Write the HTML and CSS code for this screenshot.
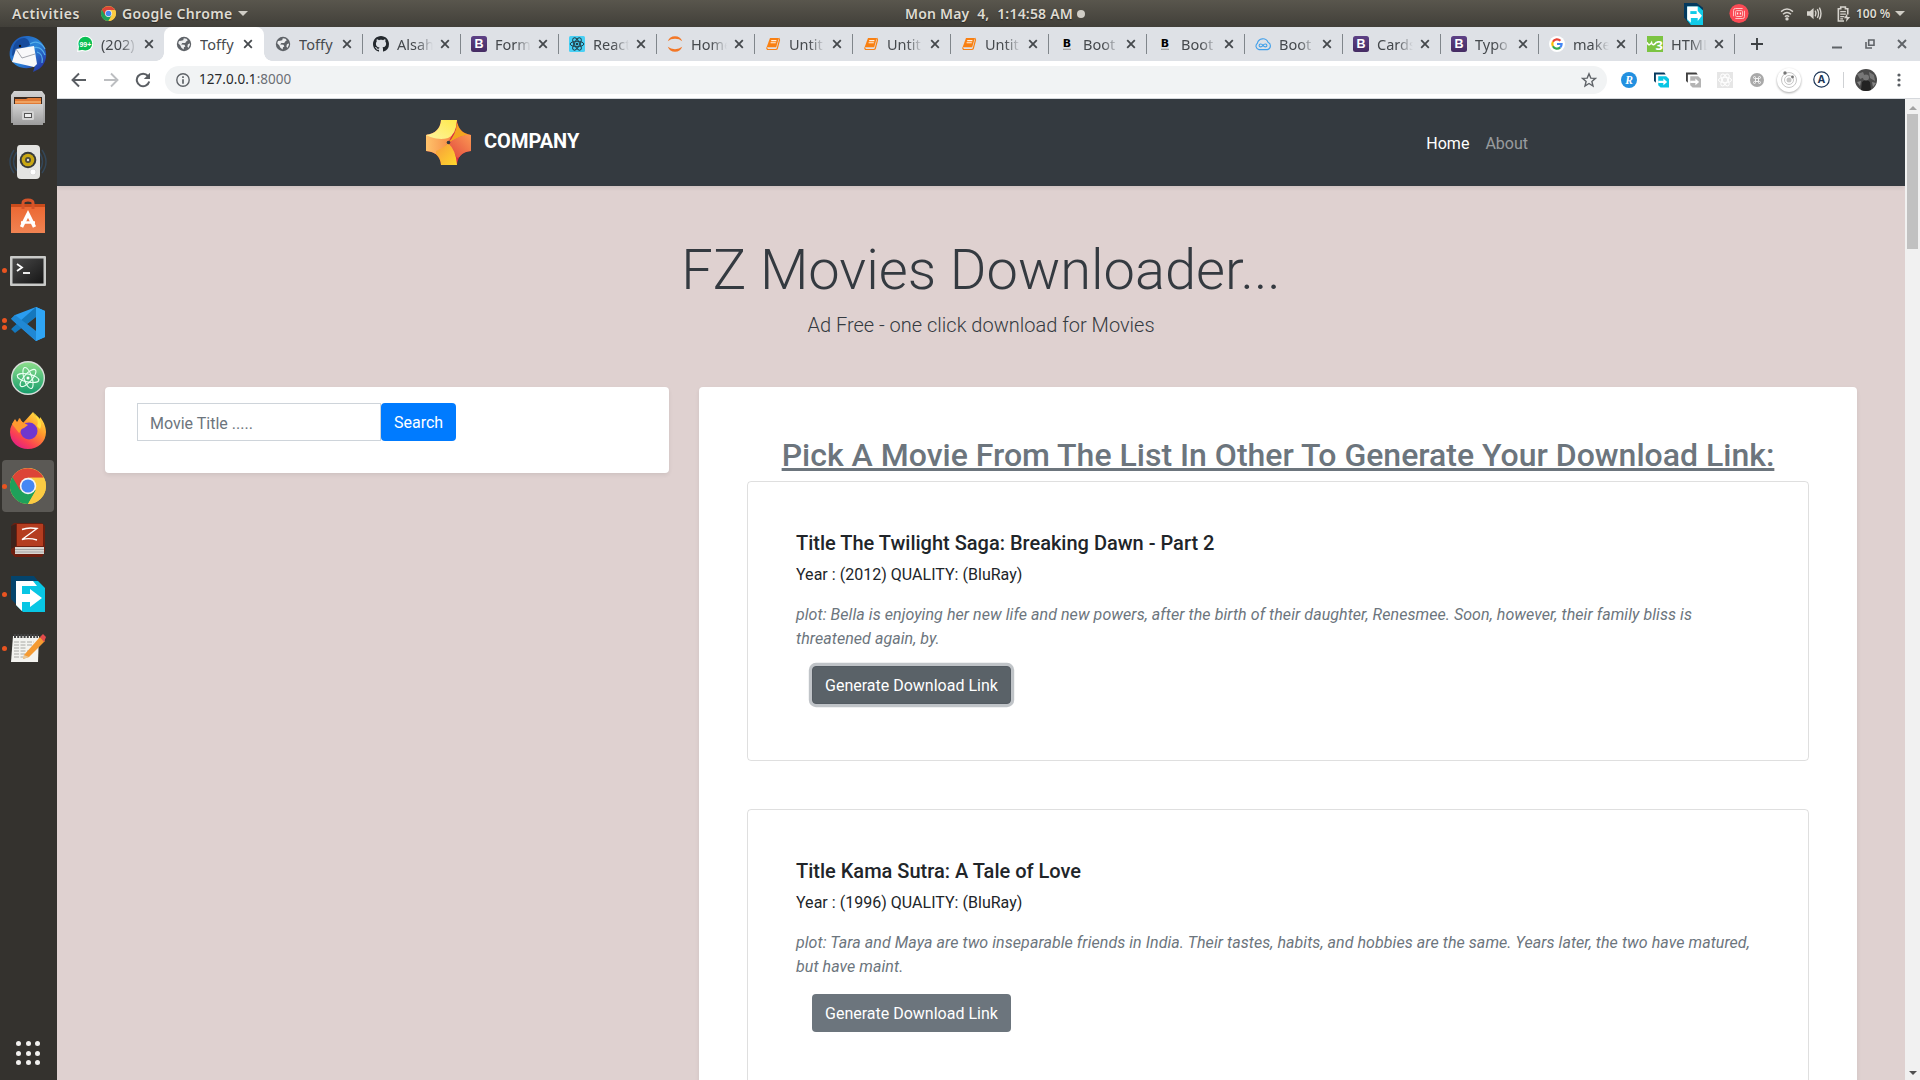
FILE: index.html
```html
<!DOCTYPE html>
<html lang="en">
<head>
<meta charset="utf-8">
<title>Toffy</title>
<link rel="stylesheet" href="styles.css">
</head>
<body>
<svg class="defs" width="0" height="0">
  <defs>
    <linearGradient id="purple" x1="0" y1="0" x2="0" y2="1"><stop offset="0" stop-color="#5d4186"/><stop offset="1" stop-color="#452c63"/></linearGradient>
    <linearGradient id="bird" x1="0" y1="0" x2="1" y2="1"><stop offset="0" stop-color="#1b4fb0"/><stop offset=".5" stop-color="#2b86d9"/><stop offset="1" stop-color="#22209a"/></linearGradient>
    <linearGradient id="metal" x1="0" y1="0" x2="0" y2="1"><stop offset="0" stop-color="#d2d2d2"/><stop offset="1" stop-color="#9c9c9c"/></linearGradient>
    <linearGradient id="bag" x1="0" y1="0" x2="0" y2="1"><stop offset="0" stop-color="#ec6630"/><stop offset="1" stop-color="#f08352"/></linearGradient>
    <linearGradient id="atomg" x1="0" y1="0" x2="0" y2="1"><stop offset="0" stop-color="#8fe08c"/><stop offset="1" stop-color="#159c6c"/></linearGradient>
    <linearGradient id="fox" x1=".9" y1="0" x2=".2" y2="1"><stop offset="0" stop-color="#fff04a"/><stop offset=".4" stop-color="#ff9a2b"/><stop offset=".75" stop-color="#fb4152"/><stop offset="1" stop-color="#e01a8c"/></linearGradient>
    <linearGradient id="term" x1="0" y1="0" x2="1" y2="1"><stop offset="0" stop-color="#4a4a4a"/><stop offset="1" stop-color="#151515"/></linearGradient>
    <symbol id="chrome" viewBox="0 0 48 48">
      <circle cx="24" cy="24" r="24" fill="#fbcb43"/>
      <path d="M24 24 3.2 12A24 24 0 0 0 24 48L34.4 30Z" fill="#1fa05a"/>
      <path d="M3.2 12A24 24 0 0 1 44.8 13H24L13.6 30Z" fill="#dc4437"/>
      <path d="M24 13H45.3A24 24 0 0 1 24 48L34.4 30Z" fill="#fbcb43"/>
      <circle cx="24" cy="24" r="11" fill="#f4f4f4"/><circle cx="24" cy="24" r="8.8" fill="#4587f3"/>
    </symbol>
    <symbol id="x" viewBox="0 0 10 10"><path d="M1.2 1.2 8.8 8.8M8.8 1.2 1.2 8.8" stroke="#45494d" stroke-width="1.8" fill="none"/></symbol>
    <symbol id="globe" viewBox="0 0 16 16"><circle cx="8" cy="8" r="7.2" fill="#5f6368"/><path d="M7.8 2.3 10.5 2.7 11.8 4.3 10.2 5.6 9.2 7 6.3 7 5.2 8.6 8.5 8.8 9.4 10.4 8 11.2 7.6 13.4 5.2 11.6 4.4 9.4 2.2 7.3 3 5 5 4.8 7.2 4.2ZM13.6 7.2 14 8.7 12.4 12 11.4 10.6 11.8 8.4Z" fill="#eceef0"/></symbol>
    <symbol id="github" viewBox="0 0 16 16"><path fill="#24292e" d="M8 0C3.58 0 0 3.58 0 8c0 3.54 2.29 6.53 5.47 7.59.4.07.55-.17.55-.38 0-.19-.01-.82-.01-1.49-2.01.37-2.53-.49-2.69-.94-.09-.23-.48-.94-.82-1.13-.28-.15-.68-.52-.01-.53.63-.01 1.08.58 1.23.82.72 1.21 1.87.87 2.33.66.07-.52.28-.87.51-1.07-1.78-.2-3.64-.89-3.64-3.95 0-.87.31-1.59.82-2.15-.08-.2-.36-1.02.08-2.12 0 0 .67-.21 2.2.82.64-.18 1.32-.27 2-.27s1.36.09 2 .27c1.53-1.04 2.2-.82 2.2-.82.44 1.1.16 1.92.08 2.12.51.56.82 1.27.82 2.15 0 3.07-1.87 3.75-3.65 3.95.29.25.54.73.54 1.48 0 1.07-.01 1.93-.01 2.2 0 .21.15.46.55.38A8.01 8.01 0 0 0 16 8c0-4.42-3.58-8-8-8z"/></symbol>
    <symbol id="boot" viewBox="0 0 16 16"><rect width="16" height="16" rx="2.5" fill="url(#purple)"/><text x="8" y="12.3" text-anchor="middle" class="glyph-b">B</text></symbol>
    <symbol id="react" viewBox="0 0 16 16"><rect width="16" height="16" rx="1.5" fill="#48d0f5"/><g fill="none" stroke="#23404a" stroke-width="1"><ellipse cx="8" cy="8" rx="6.8" ry="2.7"/><ellipse cx="8" cy="8" rx="6.8" ry="2.7" transform="rotate(60 8 8)"/><ellipse cx="8" cy="8" rx="6.8" ry="2.7" transform="rotate(120 8 8)"/></g><circle cx="8" cy="8" r="1.3" fill="#23404a"/></symbol>
    <symbol id="jupyter" viewBox="0 0 16 16"><path d="M.8 5.2A7.7 7.7 0 0 1 15.2 5.2 9.6 7 0 0 0 .8 5.2ZM.8 10.8A7.7 7.7 0 0 0 15.2 10.8 9.6 7 0 0 1 .8 10.8Z" fill="#f37726"/></symbol>
    <symbol id="book" viewBox="0 0 16 16"><path d="M5 2H13.8L11.2 11.3H1.6Z" fill="#f98012"/><path d="M13.8 2 14.5 4 12.2 12.8 11 13.5H2.4L1.5 11.5" fill="none" stroke="#f98012" stroke-width="1.2"/><path d="M6.2 4.6H11.4M5.6 6.8H10.8" stroke="#fff0e0" stroke-width="1.1"/></symbol>
    <symbol id="blackb" viewBox="0 0 16 16"><text x="8" y="11" text-anchor="middle" class="glyph-bk">B</text><path d="M4 13.3H12" stroke="#999" stroke-width="1.2"/></symbol>
    <symbol id="cloud" viewBox="0 0 16 16"><g fill="none" stroke="#42a0ea" stroke-width="1.1"><path d="M4 13.6A3.6 3.6 0 0 1 2.4 7.2 5.6 5.6 0 0 1 13 6.2 3.9 3.9 0 0 1 12.4 13.6Z"/><path d="M8 9.4C6.7 7.5 4.1 7.7 4.1 9.5S6.7 11.5 8 9.4 11.9 7.7 11.9 9.5 9.3 11.3 8 9.4Z"/></g></symbol>
    <symbol id="google" viewBox="0 0 16 16"><circle cx="8" cy="8" r="8" fill="#fff"/><g fill="none" stroke-width="2.2"><path d="M11.4 4.8A4.7 4.7 0 0 0 3.9 5.7" stroke="#ea4335"/><path d="M3.9 5.7A4.7 4.7 0 0 0 3.9 10.3" stroke="#fbbc05"/><path d="M3.9 10.3A4.7 4.7 0 0 0 11.2 11.4" stroke="#34a853"/><path d="M11.2 11.4A4.7 4.7 0 0 0 12.6 8H8" stroke="#4285f4"/></g></symbol>
    <symbol id="w3" viewBox="0 0 16 16"><rect width="16" height="16" fill="#7cc442"/><path d="M0 6.3Q1.2 9.3 2.6 8.6T4.6 6.7Q5.3 9.4 7 8.5T9.4 6.2" fill="none" stroke="#fff" stroke-width="1.5"/><text x="12.2" y="13.6" text-anchor="middle" class="glyph-3">3</text></symbol>
    <symbol id="fdm" viewBox="0 0 36 38"><path d="M0 0H24L36 8V38H12L0 25Z" fill="#04395e"/><path d="M6 6H28L36 13V38H13L6 30Z" fill="#10cbe8"/><path d="M6 6H26V14L34 22 26 31V26H13V34L6 28Z" fill="#fff"/><path d="M12 14H24V19H12Z" fill="#10cbe8"/></symbol>
    <symbol id="ext" viewBox="0 0 16 16"><path d="M0 0H11L12.5 2H2V11L0 9Z" class="ext-back"/><path d="M4.5 4H13L16 7V16H7L4.5 13.5Z" class="ext-front"/><path d="M4.5 8.7H10V6.3L14 10 10 13.7V11.3H4.5Z" fill="#fff"/></symbol>
  </defs>
</svg>

<header class="topbar">
  <div class="topbar-left">
    <span class="activities">Activities</span>
    <svg class="mini-chrome"><use href="#chrome"/></svg>
    <span class="appname">Google Chrome</span>
    <i class="caret"></i>
  </div>
  <div class="clock"><span>Mon May&nbsp; 4,&nbsp; 1:14:58 AM</span><i class="notice"></i></div>
  <div class="tray">
    <svg class="tray-fdm" viewBox="0 0 36 38" preserveAspectRatio="none"><use href="#fdm"/></svg>
    <svg class="tray-red" viewBox="0 0 22 22"><circle cx="11" cy="11" r="10.5" fill="#fb4a55"/><g fill="none" stroke="#ffc4c4" stroke-width="1.1"><path d="M5 14V7.5Q5 5.5 7 5.5H15M17 8V14.5Q17 16.5 15 16.5H7"/><rect x="7.3" y="7.8" width="7.5" height="6.5" rx="1"/></g><path d="M9.5 10V12M12.5 10V12" stroke="#fff" stroke-width="1.2"/></svg>
    <svg class="tray-wifi" viewBox="0 0 16 16"><g fill="none" stroke="#d6d3cd" stroke-width="1.7"><path d="M1.2 5.3Q8-.8 14.8 5.3"/><path d="M3.4 8.3Q8 4.3 12.6 8.3" /><path d="M5.6 11.2Q8 9 10.4 11.2"/></g><circle cx="8" cy="13.6" r="1.9" fill="#d6d3cd"/></svg>
    <svg class="tray-vol" viewBox="0 0 16 16"><path d="M0 5.5H3L7 2V14L3 10.5H0Z" fill="#d6d3cd"/><g fill="none" stroke="#d6d3cd" stroke-width="1.5"><path d="M8.8 5Q10.5 8 8.8 11"/><path d="M11 3.3Q13.6 8 11 12.7"/><path d="M13.2 1.7Q16.6 8 13.2 14.3"/></g></svg>
    <svg class="tray-bat" viewBox="0 0 14 17"><path d="M7 16H1V3H3.5V1H8.5V3H11V9" fill="none" stroke="#d6d3cd" stroke-width="1.7"/><path d="M3 6H9M3 8.7H9M3 11.3H7.5M3 13.6H6" stroke="#d6d3cd" stroke-width="1.3"/><path d="M10.5 8 7 13H9.8L9 17 13.6 11.6H10.6Z" fill="#d6d3cd"/></svg>
    <span class="percent">100 %</span>
    <i class="caret"></i>
  </div>
</header>

<div class="desktop">
  <nav class="dock">
    <div class="dock-item"><svg width="38" height="38" viewBox="0 0 38 38"><path d="M8 4C14-1 27 0 33 8 39 16 39 27 30 34L24 37 26 31C17 36 6 32 2 25-1 19 1 9 8 4Z" fill="url(#bird)"/><path d="M9 5C15 1 20 3 21 10L10 16 3 21C3 14 5 8 9 5Z" fill="#174b9c"/><path d="M21 9C27 5 33 8 36 14M24 13C30 11 34 15 36 20M28 17C32 18 34 22 33 28" fill="none" stroke="#55aeea" stroke-width="1.2"/><path d="M7 14 25 11 28 29 25 32 3 27Z" fill="#f8f8fa"/><path d="M7 14 13 23 26 19" fill="none" stroke="#9a9ca4" stroke-width=".9"/><circle cx="11" cy="11" r="1.2" fill="#111"/></svg></div>
    <div class="dock-item"><svg width="34" height="36" viewBox="0 0 34 36"><path d="M3 1H31L34 5V33H0V5Z" fill="url(#metal)"/><rect x="3" y="7" width="28" height="8" fill="#3a2a20"/><path d="M4 9H15L17 8H30V15H4Z" fill="#e07a35"/><path d="M4 12H30" stroke="#f5b070" stroke-width="1.5"/><rect x="2" y="14" width="30" height="21" fill="url(#metal)"/><rect x="11" y="21" width="12" height="9" rx="1.5" fill="#d4d4d4"/><rect x="13.5" y="23.5" width="7" height="4" fill="#eee" stroke="#555"/></svg></div>
    <div class="dock-item"><svg width="38" height="36" viewBox="0 0 38 36"><g fill="none" stroke="#33475a" stroke-width="1.4"><path d="M5 6Q-3 18 5 29M33 6Q41 18 33 29M8 8Q1 18 8 27M30 8Q37 18 30 27"/></g><path d="M11 1H27Q31 1 31 5V31Q31 35 27 35H12Q8 35 8 31V5Q8 1 11 1Z" fill="#e4e4e2"/><circle cx="19" cy="16" r="8.3" fill="#393b3b"/><circle cx="19" cy="16" r="6.3" fill="#c9a712"/><circle cx="19" cy="16" r="3" fill="#4c4b3d"/><circle cx="19" cy="16" r="1.2" fill="#ddd"/><circle cx="24" cy="28" r="3" fill="#fff" stroke="#ddd"/></svg></div>
    <div class="dock-item"><svg width="34" height="36" viewBox="0 0 34 36"><path d="M0 6H34V35H0Z" fill="url(#bag)"/><path d="M0 6H34V9H0Z" fill="#c94c1c"/><path d="M12 11V5Q12 2 17 2T22 5V11" fill="none" stroke="#d5542a" stroke-width="3"/><path d="M10.5 29 17 16 23.5 29" fill="none" stroke="#fff" stroke-width="3.5"/><path d="M10 24.5H24" stroke="#fff" stroke-width="2.5"/></svg></div>
    <div class="dock-item"><i class="run"></i><svg class="low" width="36" height="30" viewBox="0 0 36 30"><rect width="36" height="30" rx="1" fill="#c9cac8"/><rect x="2.5" y="2.5" width="31" height="25" fill="url(#term)"/><path d="M7 8 12 11.5 7 15" fill="none" stroke="#fff" stroke-width="1.8"/><path d="M13 17H20" stroke="#fff" stroke-width="1.8"/></svg></div>
    <div class="dock-item"><i class="run two"></i><svg width="34" height="34" viewBox="0 0 34 34"><path d="M25 0 34 4V30L25 34 0 12 4 8Z" fill="#2a9df0"/><path d="M0 22 25 0V10L4 26Z" fill="#1578bd"/><path d="M0 12 4 8 25 24V34Z" fill="#2088d4"/><path d="M25 10V24L16 17Z" fill="#34322e"/><path d="M25 0 34 4V30L25 34Z" fill="#2fa5f5"/><path d="M4 16.5 0 12V22Z" fill="#34322e"/></svg></div>
    <div class="dock-item"><svg width="34" height="34" viewBox="0 0 34 34"><circle cx="17" cy="17" r="16.3" fill="url(#atomg)" stroke="#d9dedb" stroke-width="1.4"/><g fill="none" stroke="#e9fff2" stroke-width="1.1"><ellipse cx="17" cy="17" rx="11" ry="4" transform="rotate(12 17 17)"/><ellipse cx="17" cy="17" rx="11" ry="4" transform="rotate(72 17 17)"/><ellipse cx="17" cy="17" rx="11" ry="4" transform="rotate(132 17 17)"/></g><circle cx="17" cy="17" r="1.5" fill="#fff"/></svg></div>
    <div class="dock-item"><svg class="high" width="36" height="37" viewBox="0 0 36 37"><path d="M23 0C25 4 28 4 30 7L30 5C35 11 36 17 36 20 36 30 28 37 18 37S0 30 0 20C0 15 2 12 5 8V12L8 10 9 6 13 11Z" fill="url(#fox)"/><circle cx="19" cy="19" r="8.5" fill="#7037cf"/><path d="M2 12 5 7 7 10 10 6C11 10 14 11 18 13L14 16C10 17 11 20 9 21Z" fill="#ff9a30"/><path d="M23 0C27 4 29 11 27 14L30 17C33 12 30 6 23 0Z" fill="#ffe13f"/></svg></div>
    <div class="dock-item active"><i class="run"></i><svg width="36" height="36"><use href="#chrome"/></svg></div>
    <div class="dock-item"><svg width="34" height="36" viewBox="0 0 34 36"><path d="M3 1H31L34 4V30L31 35H4L0 31V4Z" fill="#6d1f10"/><path d="M4 25H33V32H4Z" fill="#d9d6d2"/><path d="M4 27.5H33M4 30H33" stroke="#999" stroke-width=".8"/><path d="M6 2H32V24H6Z" fill="#b43d20"/><path d="M0 4 5 2V24L0 27Z" fill="#3d221c"/><path d="M11 7.5Q17 5 26 6.5L11 17.5Q18 15.5 26 18" fill="none" stroke="#fff" stroke-width="1.4"/></svg></div>
    <div class="dock-item"><i class="run"></i><svg width="34" height="36" viewBox="0 0 34 36"><path d="M0 0H23L27 5H5V28L0 23Z" fill="#04446c"/><path d="M5 5H27L34 12V36H12L5 29Z" fill="#08c6e4"/><path d="M5 5H22L26 10H11V18H19V13L31 22 19 31V26H11V35L5 29Z" fill="#fff"/></svg></div>
    <div class="dock-item"><i class="run"></i><svg class="high" width="36" height="34" viewBox="0 0 36 34"><path d="M3 6H29L28 32H1Z" fill="#f3f3ef"/><path d="M4 6H28" stroke="#444" stroke-width="4" stroke-dasharray="2 1.2"/><path d="M4 12H24M4 15H22M4 18H17M4 21H19M4 24H15M4 27H13" stroke="#a8a8a4" stroke-width="1" stroke-dasharray="5 1.5"/><path d="M14 25 30 7 35 11 19 27 13 29Z" fill="#f49a32"/><path d="M30 7 33 4 36 7 34 12Z" fill="#e34b4b"/><path d="M14 25 19 27 13 29Z" fill="#e6c79a"/></svg></div>
    <div class="dock-apps"><i></i><i></i><i></i><i></i><i></i><i></i><i></i><i></i><i></i></div>
  </nav>

  <main class="window">
    <div class="tabs">
      <div class="tab"><svg class="fav" viewBox="0 0 16 16"><circle cx="8.3" cy="7.7" r="7.9" fill="#fff"/><path d="M0 16 1 10 6 15Z" fill="#fff"/><circle cx="8.3" cy="7.7" r="6.9" fill="#0abf53"/><path d="M1.5 14.6 2 9.6 6 13.8Z" fill="#0abf53"/><text x="8.4" y="10.6" text-anchor="middle" class="glyph-99">99+</text></svg><span>(202)</span><svg class="close"><use href="#x"/></svg></div>
      <div class="tab current"><svg class="fav"><use href="#globe"/></svg><span>Toffy</span><svg class="close"><use href="#x"/></svg></div>
      <div class="tab sep"><svg class="fav"><use href="#globe"/></svg><span>Toffy</span><svg class="close"><use href="#x"/></svg></div>
      <div class="tab sep"><svg class="fav"><use href="#github"/></svg><span>Alsah</span><svg class="close"><use href="#x"/></svg></div>
      <div class="tab sep"><svg class="fav"><use href="#boot"/></svg><span>Form</span><svg class="close"><use href="#x"/></svg></div>
      <div class="tab sep"><svg class="fav"><use href="#react"/></svg><span>React</span><svg class="close"><use href="#x"/></svg></div>
      <div class="tab sep"><svg class="fav"><use href="#jupyter"/></svg><span>Home</span><svg class="close"><use href="#x"/></svg></div>
      <div class="tab sep"><svg class="fav"><use href="#book"/></svg><span>Untit</span><svg class="close"><use href="#x"/></svg></div>
      <div class="tab sep"><svg class="fav"><use href="#book"/></svg><span>Untit</span><svg class="close"><use href="#x"/></svg></div>
      <div class="tab sep"><svg class="fav"><use href="#book"/></svg><span>Untit</span><svg class="close"><use href="#x"/></svg></div>
      <div class="tab sep"><svg class="fav"><use href="#blackb"/></svg><span>Boot</span><svg class="close"><use href="#x"/></svg></div>
      <div class="tab sep"><svg class="fav"><use href="#blackb"/></svg><span>Boot</span><svg class="close"><use href="#x"/></svg></div>
      <div class="tab sep"><svg class="fav"><use href="#cloud"/></svg><span>Boot</span><svg class="close"><use href="#x"/></svg></div>
      <div class="tab sep"><svg class="fav"><use href="#boot"/></svg><span>Cards</span><svg class="close"><use href="#x"/></svg></div>
      <div class="tab sep"><svg class="fav"><use href="#boot"/></svg><span>Typo</span><svg class="close"><use href="#x"/></svg></div>
      <div class="tab sep"><svg class="fav"><use href="#google"/></svg><span>make</span><svg class="close"><use href="#x"/></svg></div>
      <div class="tab sep"><svg class="fav"><use href="#w3"/></svg><span>HTML</span><svg class="close"><use href="#x"/></svg></div>
      <svg class="plus" viewBox="0 0 12 12"><path d="M6 0V12M0 6H12" stroke="#3c4043" stroke-width="1.9"/></svg>
      <div class="controls">
        <svg width="10" height="12" viewBox="0 0 10 12"><path d="M0 9.5H10" stroke="#5f6368" stroke-width="2"/></svg>
        <svg width="10" height="10" viewBox="0 0 10 10"><path d="M3.7 1H9V6.3H3.7ZM1 3V9H7" fill="none" stroke="#5f6368" stroke-width="1.6"/></svg>
        <svg width="10" height="10" viewBox="0 0 10 10"><path d="M1 1 9 9M9 1 1 9" stroke="#5f6368" stroke-width="1.9"/></svg>
      </div>
    </div>

    <div class="toolbar">
      <svg class="nav-ic" viewBox="0 0 16 16"><path d="M15 8H2M8 1.5 1.5 8 8 14.5" fill="none" stroke="#5a5e63" stroke-width="1.9"/></svg>
      <svg class="nav-ic" viewBox="0 0 16 16"><path d="M1 8H14M8 1.5 14.5 8 8 14.5" fill="none" stroke="#bcbec1" stroke-width="1.9"/></svg>
      <svg class="nav-ic" viewBox="0 0 16 16"><path d="M13 4A6.3 6.3 0 1 0 14.2 9.5" fill="none" stroke="#5a5e63" stroke-width="2"/><path d="M15 .8V7H8.8Z" fill="#5a5e63"/></svg>
      <div class="omnibox">
        <svg width="14" height="14" viewBox="0 0 14 14"><circle cx="7" cy="7" r="6.2" fill="none" stroke="#5f6368" stroke-width="1.4"/><path d="M7 3.2V5M7 6.2V10.8" stroke="#5f6368" stroke-width="1.7"/></svg>
        <span class="url">127.0.0.1<em>:8000</em></span>
        <svg class="star" viewBox="0 0 16 16"><path d="M8 1.8 9.8 6.1 14.4 6.4 10.9 9.4 12 14 8 11.5 4 14 5.1 9.4 1.6 6.4 6.2 6.1Z" fill="none" stroke="#5f6368" stroke-width="1.4"/></svg>
      </div>
      <div class="exts">
        <div><svg width="16" height="16" viewBox="0 0 16 16"><circle cx="8" cy="8" r="8" fill="#2290e0"/><text x="8" y="12.2" text-anchor="middle" class="glyph-r">R</text></svg></div>
        <div class="teal"><svg width="15" height="16"><use href="#ext"/></svg></div>
        <div class="grey"><svg width="15" height="16"><use href="#ext"/></svg></div>
        <div><svg width="16" height="16" viewBox="0 0 16 16"><rect width="16" height="16" fill="#e6e6e6"/><g fill="none" stroke="#fff"><ellipse cx="8" cy="8" rx="6.5" ry="2.7"/><ellipse cx="8" cy="8" rx="6.5" ry="2.7" transform="rotate(60 8 8)"/><ellipse cx="8" cy="8" rx="6.5" ry="2.7" transform="rotate(120 8 8)"/></g></svg></div>
        <div><svg width="14" height="14" viewBox="0 0 14 14"><circle cx="7" cy="7" r="7" fill="#a9a9a9"/><path d="M5.5 5.5H8.5V8.5H5.5ZM5.5 5.5H4.5A1 1 0 1 1 5.5 4.5ZM8.5 5.5V4.5A1 1 0 1 1 9.5 5.5ZM8.5 8.5H9.5A1 1 0 1 1 8.5 9.5ZM5.5 8.5V9.5A1 1 0 1 1 4.5 8.5Z" fill="none" stroke="#f3f3f3"/></svg></div>
        <div><svg width="26" height="26" viewBox="0 0 26 26" class="orb"><circle cx="13" cy="13" r="12" fill="#fff"/><g fill="none" stroke="#c6c6c6"><circle cx="13" cy="13" r="7.5"/><circle cx="13" cy="13" r="4.5"/></g><circle cx="13" cy="13" r="2.5" fill="#c6c6c6"/><circle cx="9" cy="6" r="1.7" fill="#777"/><circle cx="16.5" cy="10" r="1.4" fill="#777"/></svg></div>
        <div><svg width="17" height="17" viewBox="0 0 17 17"><circle cx="8.5" cy="8.5" r="7.7" fill="none" stroke="#1c3556" stroke-width="1.2"/><text x="8.5" y="12.4" text-anchor="middle" class="glyph-a">A</text></svg></div>
      </div>
      <i class="bar"></i>
      <svg class="avatar" viewBox="0 0 22 22"><circle cx="11" cy="11" r="11" fill="#4a4a4a"/><path d="M2 5 8 3 10 8 5 10ZM14 3 19 6 20 12 15 9Z" fill="#777"/><path d="M7 13Q11 9 15 13L16 21Q11 23 6 21Z" fill="#222"/><circle cx="11" cy="8.5" r="3" fill="#777"/><path d="M2 13 6 12 5 17ZM17 13 21 14 18 18Z" fill="#858585"/></svg>
      <svg class="menu" viewBox="0 0 4 14"><circle cx="2" cy="2" r="1.6"/><circle cx="2" cy="7" r="1.6"/><circle cx="2" cy="12" r="1.6"/></svg>
    </div>

    <div class="viewport">
      <div class="page">
        <div class="navbar">
          <div class="brand">
            <svg width="45" height="45" viewBox="0 0 45 45">
              <defs>
                <linearGradient id="l1" x1="0" y1="1" x2="1" y2="0"><stop offset="0" stop-color="#fdf3a0"/><stop offset="1" stop-color="#ffe94a"/></linearGradient>
                <linearGradient id="l2" x1="0" y1="0" x2="1" y2="0"><stop offset="0" stop-color="#ffc36b"/><stop offset="1" stop-color="#f68a46"/></linearGradient>
                <linearGradient id="l3" x1="0" y1="0" x2="1" y2="1"><stop offset="0" stop-color="#f79a3c"/><stop offset="1" stop-color="#ffd92c"/></linearGradient>
                <linearGradient id="l4" x1="0" y1="1" x2="1" y2="0"><stop offset="0" stop-color="#e0453f"/><stop offset="1" stop-color="#fc9a52"/></linearGradient>
                <clipPath id="cross"><path d="M15 0H31Q32 13 45 15V31Q32 32 31 45H15Q14 32 0 31V15Q14 13 15 0Z"/></clipPath>
              </defs>
              <g clip-path="url(#cross)">
                <rect width="45" height="45" fill="#d92b45"/>
                <path d="M0 13Q14 23 26 15L22 23Q15 32 10 34H0Z" fill="url(#l2)"/>
                <path d="M10 0H31Q30 15 22 18 12 21 0 15Z" fill="url(#l1)"/>
                <path d="M31 3Q30 15 22 23L34 17 45 14Z" fill="#f3a51f"/>
                <path d="M22 23Q34 15 45 14V32L31 38Z" fill="url(#l4)"/>
                <path d="M22 23Q30 30 31 45H10V31Q19 27 22 23Z" fill="url(#l3)"/>
              </g>
              <circle cx="22.5" cy="22.5" r="1.8" fill="#343a40"/>
            </svg>
            <strong>COMPANY</strong>
          </div>
          <div class="links"><a class="on">Home</a><a>About</a></div>
        </div>

        <div class="hero">
          <h1>FZ Movies Downloader...</h1>
          <p>Ad Free - one click download for Movies</p>
        </div>

        <div class="columns">
          <form class="search-card">
            <input type="text" placeholder="Movie Title .....">
            <button type="button" class="btn primary">Search</button>
          </form>
          <section class="results">
            <h2>Pick A Movie From The List In Other To Generate Your Download Link:</h2>
            <article class="movie">
              <h5>Title The Twilight Saga: Breaking Dawn - Part 2</h5>
              <p>Year : (2012) QUALITY: (BluRay)</p>
              <p class="plot">plot: Bella is enjoying her new life and new powers, after the birth of their daughter, Renesmee. Soon, however, their family bliss is threatened again, by.</p>
              <button type="button" class="btn secondary focus">Generate Download Link</button>
            </article>
            <article class="movie">
              <h5>Title Kama Sutra: A Tale of Love</h5>
              <p>Year : (1996) QUALITY: (BluRay)</p>
              <p class="plot">plot: Tara and Maya are two inseparable friends in India. Their tastes, habits, and hobbies are the same. Years later, the two have matured, but have maint.</p>
              <button type="button" class="btn secondary">Generate Download Link</button>
            </article>
          </section>
        </div>
      </div>
      <div class="scrollbar"><i class="up"></i><i class="thumb"></i><i class="down"></i></div>
    </div>
  </main>
</div>
</body>
</html>
```
FILE: styles.css
```css
* { box-sizing: border-box; }
body { margin: 0; width: 1920px; height: 1080px; overflow: hidden; font-family: Roboto, sans-serif; font-size: 16px; line-height: 1.5; color: #212529; }
svg { display: block; flex: none; }
.defs { position: absolute; }
i { display: block; flex: none; }

/* glyphs inside favicons */
.glyph-b { font: bold 12.5px "Liberation Sans", sans-serif; fill: #fff; }
.glyph-bk { font: bold 11px "DejaVu Sans", sans-serif; fill: #000; }
.glyph-3 { font: bold 13px "Noto Sans", sans-serif; fill: #fff; }
.glyph-99 { font: bold 7px "Liberation Sans", sans-serif; fill: #fff; }
.glyph-r { font: italic bold 11.5px "Liberation Serif", serif; fill: #fff; }
.glyph-a { font: bold 10.5px "Noto Sans", sans-serif; fill: #1c3556; }

/* system bar */
.topbar { height: 27px; display: flex; align-items: center; background: linear-gradient(#59564d, #413f39); color: #dfdbd2; font: 600 14px/27px "Noto Sans", sans-serif; text-shadow: 0 1px 1px #2a2824; }
.topbar-left { width: 905px; display: flex; align-items: center; padding-left: 12px; }
.activities { width: 89px; letter-spacing: .55px; }
.mini-chrome { width: 15px; height: 15px; margin-right: 6px; }
.appname { width: 116px; white-space: nowrap; letter-spacing: .35px; }
.caret { border: 5px solid transparent; border-top-color: #d0cdc6; border-bottom: 0; }
.clock { width: 780px; display: flex; align-items: center; gap: 4px; white-space: nowrap; letter-spacing: .2px; }
.notice { width: 8px; height: 8px; border-radius: 50%; background: #d0cdc6; }
.tray { display: flex; align-items: center; }
.tray-fdm { width: 19px; height: 22px; margin: 0 26px 0 -1px; }
.tray-red { width: 20px; height: 21px; margin-right: 31px; }
.tray-wifi { width: 14px; height: 14px; margin-right: 13px; }
.tray-vol { width: 15px; height: 15px; margin-right: 15px; }
.tray-bat { width: 14px; height: 16px; margin-right: 5px; }
.percent { width: 39px; font-size: 12px; white-space: nowrap; }

.desktop { display: flex; height: 1053px; }

/* launcher */
.dock { width: 57px; flex: none; background: #34322e; display: flex; flex-direction: column; padding-bottom: 15px; }
.dock-item { height: 52px; width: 52px; margin: 1px 0 1px 2px; display: flex; align-items: center; justify-content: center; position: relative; }
.dock-item.active { background: #5b5955; border-radius: 4px; }
.high { margin-bottom: 3px; }
.low { margin-top: 2px; }
.run { position: absolute; left: 0; top: 24px; width: 5px; height: 5px; border-radius: 50%; background: #e95420; }
.run.two { top: 20px; box-shadow: 0 7px #e95420; }
.dock-apps { margin: auto 0 0 16px; display: grid; grid-template-columns: repeat(3, 5px); gap: 4.5px; }
.dock-apps i { height: 5px; border-radius: 50%; background: #f2f1ef; }

/* browser chrome */
.window { flex: 1; min-width: 0; display: flex; flex-direction: column; }
.tabs { height: 34px; flex: none; background: #dee1e6; display: flex; align-items: center; padding-left: 9px; }
.tab { width: 98px; height: 34px; flex: none; display: flex; align-items: center; padding-left: 11px; position: relative; }
.tab.sep::after { content: ""; position: absolute; right: -1px; top: 7px; width: 1px; height: 20px; background: #80868b; }
.tab.current { width: 100px; padding-left: 12px; background: #fff; border-radius: 8px 8px 0 0; }
.tab.current::before, .tab.current::after { content: ""; position: absolute; bottom: 0; width: 8px; height: 8px; }
.tab.current::before { left: -8px; background: radial-gradient(circle at 0 0, transparent 7.5px, #fff 8px); }
.tab.current::after { right: -8px; background: radial-gradient(circle at 100% 0, transparent 7.5px, #fff 8px); }
.fav { width: 16px; height: 16px; margin-right: 8px; }
.tab span { width: 36px; margin-right: 7px; overflow: hidden; white-space: nowrap; font: 14.5px/34px "Noto Sans", sans-serif; color: #45494d; -webkit-mask-image: linear-gradient(90deg, #000 55%, transparent); mask-image: linear-gradient(90deg, #000 55%, transparent); }
.tab.current span, .tab.current + .tab span { -webkit-mask-image: none; mask-image: none; letter-spacing: .1px; }
.close { width: 10px; height: 10px; }
.plus { width: 12px; height: 12px; margin-left: 17px; }
.controls { margin-left: auto; padding-right: 13px; display: flex; align-items: center; gap: 22.5px; }

.toolbar { height: 38px; flex: none; background: #fff; border-bottom: 1px solid #d5d8dc; display: flex; align-items: center; padding-left: 14px; }
.nav-ic { width: 16px; height: 16px; margin-right: 16px; }
.omnibox { width: 1442px; height: 28px; margin-left: -2px; border-radius: 14px; background: #f1f3f4; display: flex; align-items: center; padding: 0 10px 0 11px; }
.url { margin-left: 9px; font: 13.5px/26px "Noto Sans", sans-serif; color: #27292c; letter-spacing: .05px; padding-bottom: 2px; }
.url em { font-style: normal; color: #6b6f74; }
.star { width: 16px; height: 16px; margin-left: auto; }
.exts { display: flex; margin-left: 6px; }
.exts div { width: 32px; height: 28px; display: flex; align-items: center; justify-content: center; }
.teal { --back: #04395e; --front: #08c6e4; }
.grey { --back: #414141; --front: #b4b4b4; }
.ext-back { fill: var(--back); }
.ext-front { fill: var(--front); }
.orb { filter: drop-shadow(0 1px 1px rgba(0,0,0,.35)); }
.bar { width: 1px; height: 16px; margin: 0 11px 0 6px; background: #cfd1d4; }
.avatar { width: 22px; height: 22px; margin-right: 20px; }
.menu { width: 4px; height: 14px; fill: #5a5e63; }

/* web page */
.viewport { flex: 1; min-height: 0; display: flex; }
.page { flex: 1; min-width: 0; background: #dfd1d0; overflow: hidden; }
.navbar { height: 87px; background: #343a40; box-shadow: 0 2px 4px rgba(0,0,0,.075); display: flex; justify-content: space-between; padding: 0 377px 0 369px; }
.brand { display: flex; padding-top: 21px; gap: 13px; color: #fff; }
.brand strong { font-size: 20px; line-height: 30px; padding-top: 6px; font-weight: 700; }
.links { display: flex; gap: 16px; padding-top: 33px; }
.links a { color: rgba(255,255,255,.5); }
.links .on { color: #fff; }
.hero { height: 201px; padding-top: 51px; text-align: center; }
h1, h2, h5, p { margin: 0; }
h1 { font-size: 56px; font-weight: 300; line-height: 67px; color: #343a40; margin-bottom: 6px; }
.hero p { font-size: 20px; font-weight: 300; line-height: 30px; color: #343a40; }
.columns { display: flex; align-items: flex-start; gap: 30px; padding: 0 48px; }
.search-card, .results { background: #fff; border-radius: 4px; box-shadow: 0 2px 4px rgba(0,0,0,.075); }
.search-card { width: 564px; height: 86px; padding: 16px 32px; display: flex; align-items: flex-start; }
input { width: 244px; height: 38px; padding: 8px 12px 6px; border: 1px solid #ced4da; border-radius: 0; font: 16px/24px Roboto, sans-serif; background: #fff; }
input::placeholder { color: #6c757d; opacity: 1; }
.btn { height: 38px; padding: 7px 12px 5px; border: 1px solid transparent; border-radius: 4px; color: #fff; font: 16px/24px Roboto, sans-serif; white-space: nowrap; }
.primary { background: #007bff; }
.secondary { background: #6c757d; margin: 0 16px 8px; display: block; }
.focus { background: #5a6268; border-color: #545b62; box-shadow: 0 0 0 3.2px rgba(130,138,145,.5); }
.results { flex: 1; min-width: 0; padding: 49px 48px 48px; }
h2 { font-size: 32px; font-weight: 500; line-height: 38.4px; margin-bottom: 7px; text-align: center; text-decoration: underline; color: #6c757d; white-space: nowrap; }
.movie { border: 1px solid rgba(0,0,0,.125); border-radius: 4px; padding: 49px 48px 48px; margin-bottom: 48px; }
h5 { font-size: 20px; font-weight: 500; line-height: 24px; margin-bottom: 8px; }
.movie p { margin-bottom: 16px; letter-spacing: .02px; }
.movie .plot { color: #6c757d; font-style: italic; margin-bottom: 15px; letter-spacing: .066px; }

.scrollbar { width: 15px; background: #f1f1f1; display: flex; flex-direction: column; align-items: center; padding: 7px 0 5px; }
.up { border: 4px solid transparent; border-top: 0; border-bottom-color: #a3a3a3; }
.thumb { width: 11px; height: 135px; margin-top: 4px; background: #c1c1c1; }
.down { margin-top: auto; border: 4px solid transparent; border-bottom: 0; border-top-color: #505050; }
```
